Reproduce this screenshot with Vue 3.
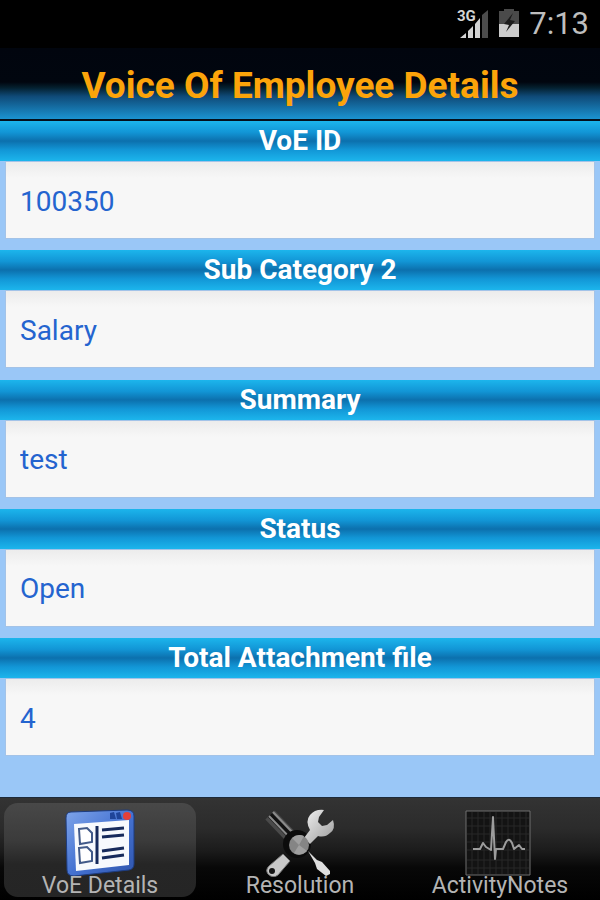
<template>
  <div class="screen">
    <div class="status-bar">
      <svg class="signal" viewBox="0 0 34 36" width="34" height="36">
        <text class="network" x="2" y="15">3G</text>
        <path
          d="M5 32 L11 27 V32 Z M13 25 L18 20 V32 H13 Z M20 18 L25 12 V32 H20 Z"
          fill="#d4d4d4"
        />
        <path d="M27 9 L33 4 V32 H27 Z" fill="#4c4c4c" />
      </svg>
      <svg class="battery" viewBox="0 0 20 30" width="20" height="30">
        <path d="M0 2 H5 V0 H15 V2 H20 V15 H0 Z" fill="#4a4a4a" />
        <path d="M0 15 H20 V28 H0 Z" fill="#cbcbcb" />
        <path d="M14 4 L5 15 L10 16 L7 23 L16 12 L11 11 Z" fill="#1c1c1c" />
      </svg>
      <span class="clock">7:13</span>
    </div>

    <h1 class="title">Voice Of Employee Details</h1>

    <form class="details" @submit.prevent>
      <div v-for="field in fields" :key="field.id" class="field">
        <label class="field-label" :for="field.id">{{ field.label }}</label>
        <input :id="field.id" v-model="field.value" class="field-input" type="text" />
      </div>
    </form>

    <nav class="tabs">
      <button
        v-for="tab in tabs"
        :key="tab"
        type="button"
        class="tab"
        :class="{ active: tab === activeTab }"
        @click="activeTab = tab"
      >
        <svg v-if="tab === 'VoE Details'" class="tab-icon" viewBox="0 0 72 68" width="72" height="68">
          <defs>
            <linearGradient id="frame" x1="0" y1="0" x2="1" y2="1">
              <stop offset="0" stop-color="#7fa5ea" />
              <stop offset="0.5" stop-color="#4673d2" />
              <stop offset="1" stop-color="#2f55ad" />
            </linearGradient>
          </defs>
          <path
            d="M7 3 L63 1 Q70 1 70 7 V55 Q70 60 65 61 L10 67 Q3 67 3 61 L2 9 Q2 3 7 3 Z"
            fill="url(#frame)"
            stroke="#1d3c80"
          />
          <path d="M10 15 L65 11 V56 L12 62 Z" fill="#f7f9fd" />
          <path d="M46 4 L50 3 L52 10 H46 Z M52 4 L56 3 L58 10 H53 Z" fill="#1f4499" />
          <circle cx="63" cy="7" r="4" fill="#e5403a" />
          <g fill="#fff" stroke="#415989" stroke-width="2">
            <path d="M15 20 L23 19 L28 24 V33 L16 35 Z" />
            <path d="M15 39 L23 38 L28 43 V52 L16 54 Z" />
          </g>
          <g fill="none" stroke="#172a5c" stroke-width="3">
            <path d="M33 17 V55" />
            <path d="M38 21 L60 19 M38 28 L60 26 M38 42 L60 39 M38 49 L60 46" />
          </g>
        </svg>

        <svg v-else-if="tab === 'Resolution'" class="tab-icon" viewBox="0 0 72 68" width="72" height="68">
          <defs>
            <linearGradient id="steel" x1="0" y1="0" x2="1" y2="1">
              <stop offset="0" stop-color="#f2f2f2" />
              <stop offset="1" stop-color="#9a9a9a" />
            </linearGradient>
          </defs>
          <path d="M6 6 L30 31" stroke="#4a4a4a" stroke-width="13" />
          <path d="M6 6 L30 31" stroke="#111" stroke-width="6" />
          <path d="M5 7 L29 32 M9 3 L33 28" stroke="#8a8a8a" stroke-width="2" />
          <circle cx="33" cy="35" r="14" fill="#0c0c0c" />
          <path
            d="M40 29 L46 21 Q41 12 46 6 Q51 0 60 1 L55 8 L54 13 L58 17 L63 16 L69 11 Q72 20 66 24 Q61 29 54 27 L46 35 Z"
            fill="url(#steel)"
          />
          <path
            d="M19 45 L5 57 Q1 61 4 65 Q9 70 14 66 L26 52 Z"
            fill="#c9c9c9"
            stroke="#777"
          />
          <circle cx="8" cy="62" r="3" fill="#151515" />
          <path
            d="M44 42 L53 51 L58 53 L66 62 L66 65 L62 67 L53 60 L51 54 Z"
            fill="#dedede"
          />
          <circle cx="35" cy="36" r="10" fill="#858585" />
          <path
            d="M35 36 L28 29 Q34 24 40 27 Z M35 36 L43 42 Q36 48 30 44 Z"
            fill="#a0a0a0"
          />
        </svg>

        <svg v-else class="tab-icon" viewBox="0 0 72 68" width="72" height="68">
          <path d="M2 2 H66 V66 H2 Z" fill="#131313" stroke="#6e6e6e" />
          <path
            d="M8 3 V65 M14 3 V65 M20 3 V65 M26 3 V65 M32 3 V65 M38 3 V65 M44 3 V65 M50 3 V65 M56 3 V65 M62 3 V65
               M3 9 H65 M3 17 H65 M3 25 H65 M3 33 H65 M3 41 H65 M3 51 H65 M3 59 H65"
            stroke="#282828"
            fill="none"
          />
          <path
            d="M9 40 H16 L19 34 L22 38 L27 41 L29 8 L31 50 L32 40 H39 L42 33 Q45 28 48 34 L50 40 L55 36 L58 40 H61"
            stroke="#9c9c9c"
            stroke-width="2"
            stroke-linejoin="round"
            fill="none"
          />
        </svg>
        <span class="tab-label">{{ tab }}</span>
      </button>
    </nav>
  </div>
</template>

<script setup>
import { ref } from "vue";

const fields = ref([
  { id: "voe-id", label: "VoE ID", value: "100350" },
  { id: "sub-category", label: "Sub Category 2", value: "Salary" },
  { id: "summary", label: "Summary", value: "test" },
  { id: "status", label: "Status", value: "Open" },
  { id: "attachments", label: "Total Attachment file", value: "4" },
]);

const tabs = ["VoE Details", "Resolution", "ActivityNotes"];
const activeTab = ref("VoE Details");
</script>

<style>
body {
  margin: 0;
  background-color: #9ac7f7;
}
</style>

<style scoped>
.screen {
  display: flex;
  flex-direction: column;
  min-height: 100vh;
  font-family: Roboto, "Noto Sans", sans-serif;
  background-color: #9ac7f7;
}

.status-bar {
  display: flex;
  align-items: center;
  justify-content: flex-end;
  gap: 10px;
  height: 48px;
  padding: 0 11px;
  color: #bebebe;
  background-color: #000;
}

.network {
  font-size: 15px;
  font-weight: 700;
  fill: #d4d4d4;
}

.clock {
  font-size: 31px;
  line-height: 48px;
}

.title {
  margin: 0;
  padding-top: 5px;
  border-bottom: 2px solid #04101c;
  font-size: 37px;
  font-weight: 700;
  line-height: 66px;
  text-align: center;
  color: #fca40a;
  background: linear-gradient(#01050e 0%, #01060f 48%, #04202f 56%, #0f4a78 68%, #1b94d2 100%);
}

.details {
  display: flex;
  flex: 1;
  flex-direction: column;
  justify-content: space-between;
  gap: 11px;
  padding-bottom: 41px;
}

.field-label {
  display: block;
  font-size: 28px;
  font-weight: 700;
  line-height: 40px;
  text-align: center;
  color: #fff;
  background: linear-gradient(#1cb5ec 0%, #1296d6 28%, #0c70ad 50%, #1296d6 72%, #1cb5ec 100%);
}

.field-input {
  display: block;
  box-sizing: border-box;
  width: calc(100% - 10px);
  height: 78px;
  margin: 0 5px;
  padding: 2px 14px 0;
  border: 1px solid #a3c3e8;
  border-radius: 0;
  outline: none;
  font-family: inherit;
  font-size: 28px;
  color: #2464cf;
  background: linear-gradient(#ececec 0, #f7f7f7 16px);
}

.tabs {
  display: grid;
  grid-template-columns: repeat(3, 1fr);
  border-top: 1px solid #1c2a3a;
  background: linear-gradient(#333 0%, #2b2b2b 30%, #1b1b1b 52%, #080808 68%, #000 100%);
}

.tab {
  display: flex;
  flex-direction: column;
  align-items: center;
  margin: 5px 4px 3px;
  padding: 6px 0 3px;
  border: 0;
  border-radius: 14px;
  font-family: inherit;
  color: #b4b4b4;
  background: transparent;
  cursor: pointer;
}

.tab.active {
  background: linear-gradient(#484848 0%, #3b3b3b 40%, #262626 65%, #252525 100%);
}

.tab-icon {
  display: block;
}

.tab-label {
  font-size: 23px;
  line-height: 17px;
  white-space: nowrap;
}
</style>
